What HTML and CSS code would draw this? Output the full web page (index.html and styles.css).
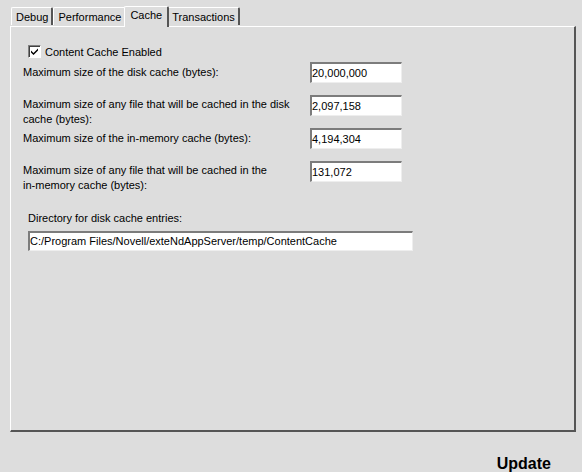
FILE: index.html
```html
<!DOCTYPE html>
<html>
<head>
<meta charset="utf-8">
<link rel="stylesheet" href="styles.css">
</head>
<body>
<div class="page">
  <div class="tabs">
    <div class="tab">Debug</div>
    <div class="tab">Performance</div>
    <div class="tab active">Cache</div>
    <div class="tab">Transactions</div>
  </div>
  <div class="panel">
    <label class="check-row">
      <span class="checkbox"><svg width="9" height="9" viewBox="0 0 9 9"><path d="M1 3.5 L3.5 6 L8 1.5 L8 3.5 L3.5 8 L1 5.5 Z" fill="#000"/></svg></span>
      <span>Content Cache Enabled</span>
    </label>
    <div class="form">
      <div class="label single">Maximum size of the disk cache (bytes):</div>
      <div class="field">20,000,000</div>
      <div class="label">Maximum size of any file that will be cached in the disk cache (bytes):</div>
      <div class="field">2,097,158</div>
      <div class="label single">Maximum size of the in-memory cache (bytes):</div>
      <div class="field">4,194,304</div>
      <div class="label">Maximum size of any file that will be cached in the <span class="nowrap">in-memory</span> cache (bytes):</div>
      <div class="field">131,072</div>
    </div>
    <div class="dir">
      <div class="dir-label">Directory for disk cache entries:</div>
      <div class="field wide">C:/Program Files/Novell/exteNdAppServer/temp/ContentCache</div>
    </div>
  </div>
  <div class="footer">
    <span class="update">Update</span>
  </div>
</div>
</body>
</html>
```
FILE: styles.css
```css
html, body {
  margin: 0;
  padding: 0;
  background: #dddddd;
  font-family: "Liberation Sans", Arial, sans-serif;
  font-size: 11px;
  color: #000;
}
.page {
  width: 582px;
  height: 472px;
  padding: 5px 0 0 10px;
  box-sizing: border-box;
}
.tabs {
  display: flex;
  align-items: flex-end;
  height: 21px;
  padding-left: 1px;
  position: relative;
  z-index: 1;
}
.tab {
  height: 17px;
  line-height: 18px;
  padding: 0 3px 0 4px;
  border-top: 1px solid #ffffff;
  border-left: 1px solid #ffffff;
  border-right: 2px solid #555555;
  border-radius: 2px 2px 0 0;
  box-sizing: content-box;
  margin-bottom: 1px;
}
.tab.active {
  height: 20px;
  line-height: 17px;
  padding: 0 5px 0 5px;
  margin: 0 -2px -1px -2px;
  background: #dddddd;
  position: relative;
  z-index: 2;
}
.panel {
  width: 551px;
  height: 385px;
  border-top: 1px solid #ffffff;
  border-left: 1px solid #ffffff;
  border-right: 2px solid #555555;
  border-bottom: 2px solid #555555;
  padding: 18px 0 0 12px;
}
.check-row {
  display: flex;
  align-items: center;
  gap: 4px;
  height: 13px;
  padding-left: 5px;
}
.checkbox {
  width: 11px;
  height: 11px;
  background: #fff;
  border-top: 1px solid #808080;
  border-left: 1px solid #808080;
  border-right: 1px solid #ffffff;
  border-bottom: 1px solid #ffffff;
  box-shadow: inset 1px 1px 0 #404040;
  display: flex;
  align-items: center;
  justify-content: center;
}
.form {
  display: grid;
  grid-template-columns: 287px 92px;
  grid-auto-rows: 21px;
  row-gap: 12px;
  margin-top: 4px;
}
.label {
  line-height: 15px;
  padding-top: 2px;
  width: 280px;
}
.label.single {
  padding-top: 3px;
}
.nowrap {
  white-space: nowrap;
}
.field {
  height: 21px;
  box-sizing: border-box;
  background: #ffffff;
  border-top: 2px solid #7c7c7c;
  border-left: 2px solid #7c7c7c;
  border-right: 1px solid #eeeeee;
  border-bottom: 1px solid #eeeeee;
  line-height: 18px;
  white-space: nowrap;
}
.dir {
  margin-top: 29px;
  padding-left: 5px;
}
.dir-label {
  line-height: 14px;
  height: 14px;
}
.field.wide {
  width: 385px;
  height: 20px;
  margin-top: 6px;
  line-height: 17px;
}
.footer {
  display: flex;
  justify-content: flex-end;
  padding-right: 31px;
  padding-top: 23px;
}
.update {
  font-weight: bold;
  font-size: 16px;
  line-height: 18px;
}
```
